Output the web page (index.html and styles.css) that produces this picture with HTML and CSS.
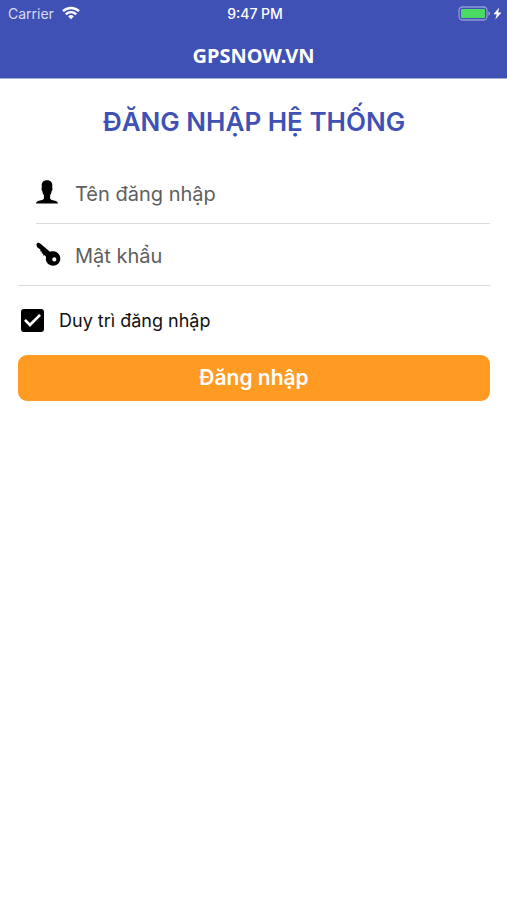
FILE: index.html
```html
<!DOCTYPE html>
<html lang="vi">
<head>
<meta charset="utf-8">
<meta name="viewport" content="width=device-width, initial-scale=1">
<title>GPSNOW.VN</title>
<link rel="stylesheet" href="styles.css">
</head>
<body>
<header class="header">
  <div class="status">
    <div class="carrier">
      <span>Carrier</span>
      <svg class="wifi" viewBox="0 0 18 14" aria-hidden="true">
        <g fill="none" stroke="#fff" stroke-width="2.4">
          <path d="M1 5.200a11.500 11.500 0 0 1 16 0"/>
          <path d="M3.800 8.300a7.400 7.400 0 0 1 10.400 0"/>
        </g>
        <path fill="#fff" d="M6.200 10.400a4 4 0 0 1 5.600 0L9 13.300z"/>
      </svg>
    </div>
    <span class="time">9:47 PM</span>
    <svg class="battery" viewBox="0 0 44 16" aria-hidden="true">
      <rect x="1" y="2" width="28" height="13" rx="3.500" fill="none" stroke="#919bd6" stroke-width="1.300"/>
      <rect x="3" y="4" width="24" height="9" rx="1" fill="#4cdb62"/>
      <path d="M30.300 6.300q1.700.5 1.700 2.200t-1.700 2.200z" fill="#919bd6"/>
      <path d="M41.200 2.500L35.500 9.200h3.300l-1.500 5.300L43.500 7.400h-3.400z" fill="#fff"/>
    </svg>
  </div>
  <div class="brand">GPSNOW.VN</div>
</header>
<main class="main">
  <h1 class="title">ĐĂNG NHẬP HỆ THỐNG</h1>
  <form class="form">
    <div class="field field-inset">
      <label for="username" aria-label="Tên đăng nhập">
        <svg class="icon" viewBox="0 0 24 24" aria-hidden="true">
          <path d="M11-.8C7.400-.8 5.600 1.300 5.700 4.800l.1 2.300c-.6.300-.4 2.500.5 3 .3 2 .9 3.200 1.600 4.200v2.600c0 1.200-.8 1.600-1.900 2C3.400 19.800.2 19.800 0 22.500h22c-.2-2.700-3.400-2.700-6-3.600-1.100-.4-1.900-.8-1.900-2v-2.600c.7-1 1.300-2.200 1.600-4.200.9-.5 1.100-2.700.5-3l.1-2.300C16.400 1.300 14.600-.8 11-.8z"/>
        </svg>
      </label>
      <input id="username" type="text" placeholder="Tên đăng nhập">
    </div>
    <div class="field">
      <label for="password" aria-label="Mật khẩu">
        <svg class="icon" viewBox="0 0 24 24" aria-hidden="true">
          <path fill-rule="evenodd" d="M.4 1.300Q.9-.5 2.800-.3L4.800.9l9.200 7.900c5.300-1.700 10.300 1.600 10.300 6.900 0 4-3.200 7-7.200 7-4.900 0-8.200-4-7-8.800L8.800 12.300l-1.700.3.100-2-1.500-.1.100-1.900-1.500-.2.200-1.600L1 4zM18.300 14.300a2.100 2.100 0 1 0 0 4.200 2.100 2.100 0 0 0 0-4.200z"/>
        </svg>
      </label>
      <input id="password" type="password" placeholder="Mật khẩu">
    </div>
    <label class="remember">
      <input type="checkbox" checked>
      <span>Duy trì đăng nhập</span>
    </label>
    <button class="submit" type="button">Đăng nhập</button>
  </form>
</main>
</body>
</html>
```
FILE: styles.css
```css
* {
  box-sizing: border-box;
}

body {
  margin: 0;
  background: #fff;
  color: #111;
  font-family: Inter, "Liberation Sans", sans-serif;
}

.header {
  background: #3f51b5;
  color: #fff;
  border-bottom: 1px solid #a5aedd;
}

.status {
  display: grid;
  grid-template-columns: 1fr auto 1fr;
  align-items: center;
  height: 26px;
  padding: 0 5px 0 8px;
  font-size: 14px;
}

.carrier {
  display: flex;
  align-items: center;
  gap: 8px;
  color: #d9dcf0;
}

.wifi {
  width: 18px;
  height: 14px;
}

.time {
  font-weight: 500;
}

.battery {
  width: 44px;
  height: 16px;
  justify-self: end;
}

.brand {
  height: 52px;
  font: bold 20px/60px "Noto Sans", sans-serif;
  text-align: center;
}

.main {
  padding: 24px 17px 0 18px;
}

.title {
  margin: 0;
  color: #3f51b5;
  font-size: 26px;
  font-weight: 600;
  line-height: 38px;
  text-align: center;
}

.form {
  display: flex;
  flex-direction: column;
  padding-top: 21px;
}

.field {
  display: flex;
  align-items: center;
  gap: 15px;
  height: 62px;
  padding-left: 18px;
  border-bottom: 1px solid #dcdcdc;
}

.field-inset {
  margin-left: 18px;
  padding-left: 0;
}

.icon {
  display: block;
  width: 24px;
  height: 24px;
  overflow: visible;
  fill: #000;
}

.field input {
  flex: 1;
  min-width: 0;
  padding: 2px 0 0;
  border: 0;
  outline: 0;
  background: none;
  color: #111;
  font: 20px/28px Inter, "Liberation Sans", sans-serif;
}

.field input::placeholder {
  color: #5e5e5e;
  opacity: 1;
}

.remember {
  display: flex;
  align-items: center;
  gap: 15px;
  height: 69px;
  padding-left: 3px;
  font-size: 18px;
}

.remember input {
  appearance: none;
  display: grid;
  place-items: center;
  width: 23px;
  height: 23px;
  margin: 0;
  border: 2px solid #000;
  border-radius: 3px;
}

.remember input:checked {
  background: #000;
}

.remember input:checked::after {
  content: "";
  width: 17px;
  height: 13px;
  background: #fff;
  clip-path: polygon(0 52%, 11% 38%, 35% 70%, 89% 0, 100% 14%, 35% 100%);
}

.submit {
  height: 46px;
  border: 0;
  border-radius: 9px;
  background: #ff9a22;
  color: #fff;
  font: 600 21px/28px Inter, "Liberation Sans", sans-serif;
}
```
